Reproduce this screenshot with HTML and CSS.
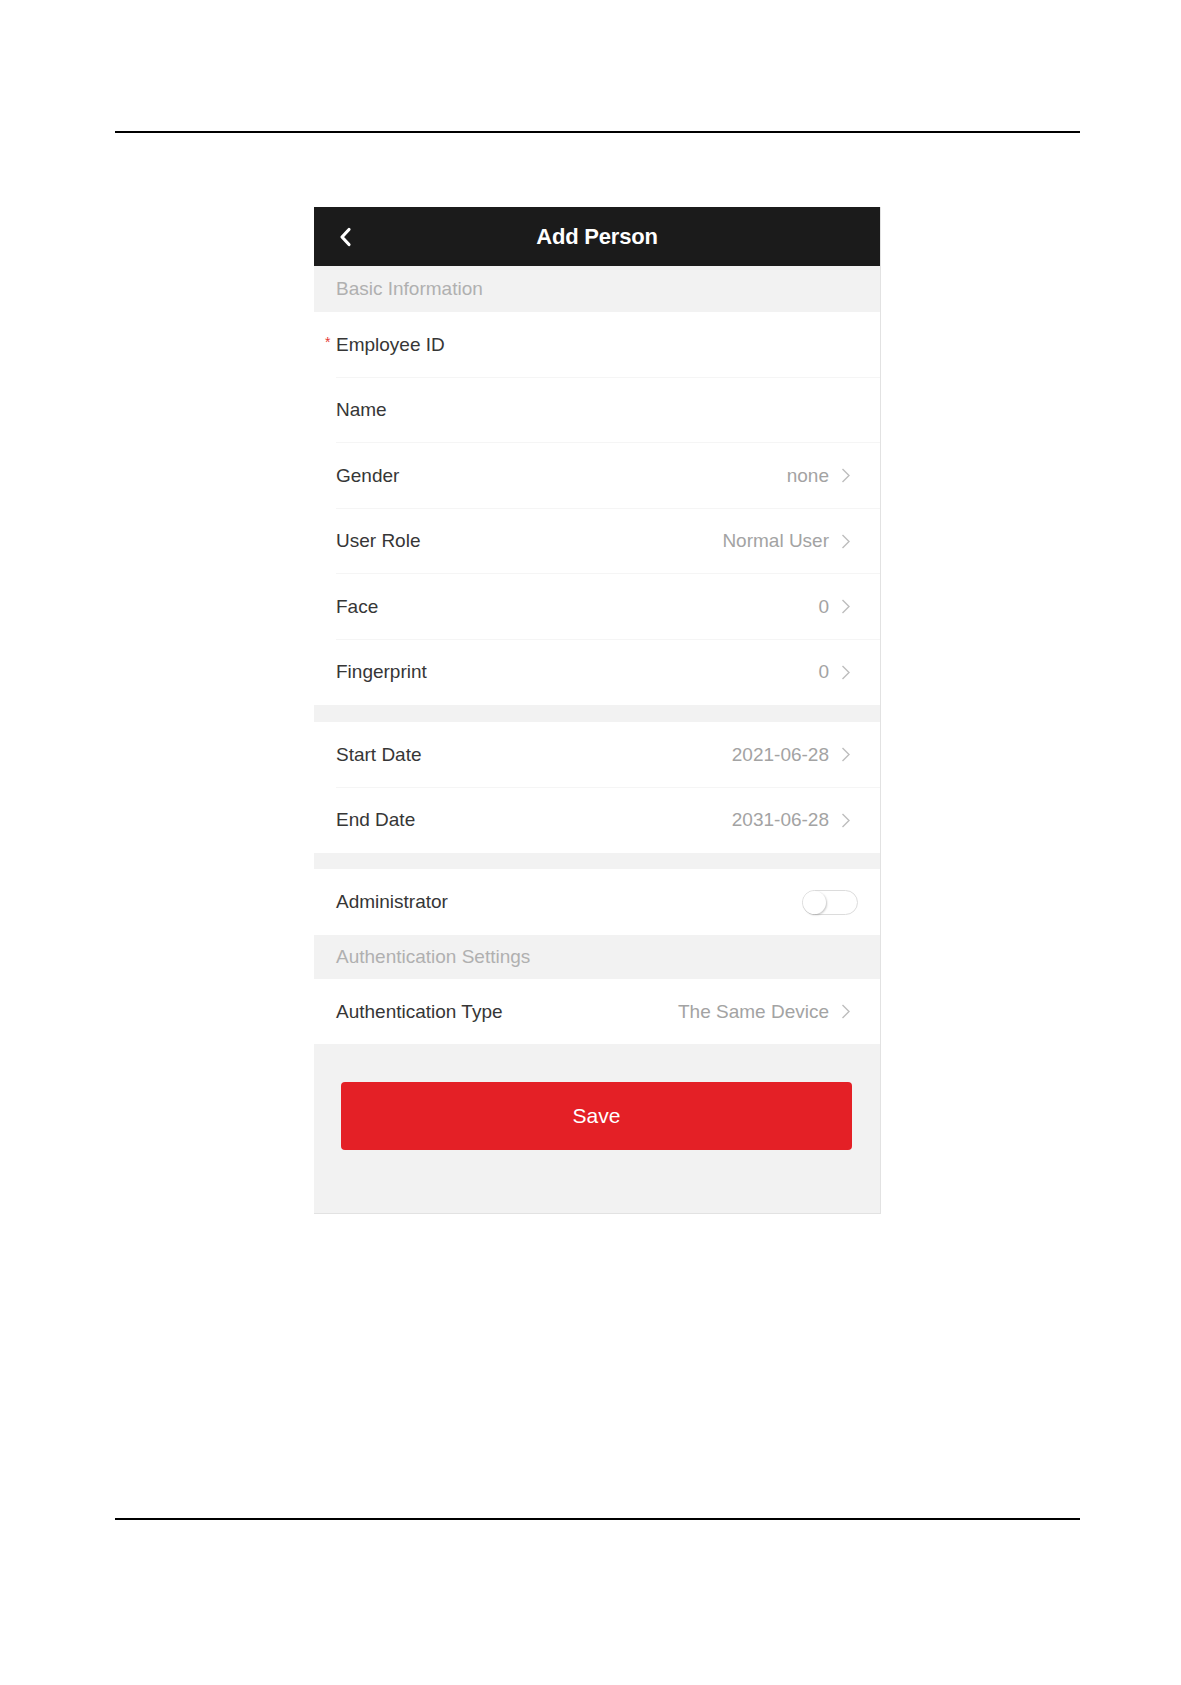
FILE: index.html
```html
<!DOCTYPE html>
<html lang="en">
<head>
<meta charset="utf-8">
<title>Add Person</title>
<link rel="stylesheet" href="styles.css">
</head>
<body>
<div class="page">
  <hr class="rule rule-top">
  <div class="phone">
    <div class="topbar">
      <span class="back">
        <svg width="14" height="20" viewBox="0 0 14 20"><polyline points="11,2.5 4,10 11,17.5" fill="none" stroke="#fff" stroke-width="3.2" stroke-linecap="round" stroke-linejoin="round"/></svg>
      </span>
      <span class="title">Add Person</span>
      <span class="spacer"></span>
    </div>

    <div class="section">Basic Information</div>
    <div class="row"><span class="label"><span class="req">*</span>Employee ID</span></div>
    <div class="row"><span class="label">Name</span></div>
    <div class="row"><span class="label">Gender</span><span class="value">none</span><svg class="chev" width="10" height="15" viewBox="0 0 10 15"><polyline points="1.5,1 8,7.5 1.5,14" fill="none" stroke="#bdbdbd" stroke-width="1.4"/></svg></div>
    <div class="row"><span class="label">User Role</span><span class="value">Normal User</span><svg class="chev" width="10" height="15" viewBox="0 0 10 15"><polyline points="1.5,1 8,7.5 1.5,14" fill="none" stroke="#bdbdbd" stroke-width="1.4"/></svg></div>
    <div class="row"><span class="label">Face</span><span class="value">0</span><svg class="chev" width="10" height="15" viewBox="0 0 10 15"><polyline points="1.5,1 8,7.5 1.5,14" fill="none" stroke="#bdbdbd" stroke-width="1.4"/></svg></div>
    <div class="row last"><span class="label">Fingerprint</span><span class="value">0</span><svg class="chev" width="10" height="15" viewBox="0 0 10 15"><polyline points="1.5,1 8,7.5 1.5,14" fill="none" stroke="#bdbdbd" stroke-width="1.4"/></svg></div>

    <div class="gap gap-a"></div>
    <div class="row"><span class="label">Start Date</span><span class="value">2021-06-28</span><svg class="chev" width="10" height="15" viewBox="0 0 10 15"><polyline points="1.5,1 8,7.5 1.5,14" fill="none" stroke="#bdbdbd" stroke-width="1.4"/></svg></div>
    <div class="row last"><span class="label">End Date</span><span class="value">2031-06-28</span><svg class="chev" width="10" height="15" viewBox="0 0 10 15"><polyline points="1.5,1 8,7.5 1.5,14" fill="none" stroke="#bdbdbd" stroke-width="1.4"/></svg></div>

    <div class="gap gap-b"></div>
    <div class="row row-admin last"><span class="label">Administrator</span><span class="toggle"><span class="knob"></span></span></div>

    <div class="section section-auth">Authentication Settings</div>
    <div class="row row-auth last"><span class="label">Authentication Type</span><span class="value">The Same Device</span><svg class="chev" width="10" height="15" viewBox="0 0 10 15"><polyline points="1.5,1 8,7.5 1.5,14" fill="none" stroke="#bdbdbd" stroke-width="1.4"/></svg></div>

    <div class="footer">
      <button class="save" type="button">Save</button>
    </div>
  </div>
  <hr class="rule rule-bottom">
</div>
</body>
</html>
```

FILE: styles.css
```css
* { box-sizing: border-box; }

html, body {
  margin: 0;
  padding: 0;
  background: #ffffff;
}

body {
  font-family: "Liberation Sans", Arial, sans-serif;
  color: #333333;
}

.page {
  width: 965px;
  margin-left: 115px;
  padding-top: 131px;
  padding-bottom: 165px;
}

.rule {
  margin: 0;
  border: 0;
  height: 2px;
  background: #000000;
}

.phone {
  width: 567px;
  height: 1007px;
  margin-top: 74px;
  margin-left: 199px;
  background: #ffffff;
  border-right: 1px solid #e2e2e2;
  border-bottom: 1px solid #e2e2e2;
  display: flex;
  flex-direction: column;
}

.rule-bottom {
  margin-top: 304px;
}

.topbar {
  height: 59px;
  flex: 0 0 59px;
  background: #1b1b1b;
  display: grid;
  grid-template-columns: 60px 1fr 60px;
  align-items: center;
}

.back {
  display: flex;
  align-items: center;
  padding-left: 24px;
  padding-top: 1px;
}

.title {
  text-align: center;
  color: #ffffff;
  font-weight: bold;
  font-size: 22px;
  letter-spacing: -0.2px;
}

.section {
  height: 46px;
  flex: 0 0 46px;
  background: #f2f2f2;
  color: #b0b0b0;
  font-size: 19px;
  padding-left: 22px;
  display: flex;
  align-items: center;
}

.section-auth {
  height: 44px;
  flex: 0 0 44px;
}

.row {
  height: 65.5px;
  flex: 0 0 65.5px;
  display: flex;
  align-items: center;
  padding-left: 22px;
  padding-right: 29px;
  position: relative;
  background: #ffffff;
}

.row::after {
  content: "";
  position: absolute;
  left: 22px;
  right: 0;
  bottom: 0;
  height: 1px;
  background: #f5f5f5;
}

.row.last::after { display: none; }

.row-admin { height: 66px; flex-basis: 66px; padding-right: 22px; }
.row-auth { height: 65px; flex-basis: 65px; }

.label {
  flex: 1;
  font-size: 19px;
  color: #363636;
}

.req {
  display: inline-block;
  width: 11px;
  color: #e53935;
  font-size: 14px;
  margin-left: -11px;
  vertical-align: 4px;
}

.value {
  font-size: 19px;
  color: #a3a3a3;
  margin-right: 12px;
}

.chev {
  display: block;
  flex: 0 0 auto;
}

.gap {
  background: #f2f2f2;
}

.gap-a { height: 17px; flex: 0 0 17px; }
.gap-b { height: 16px; flex: 0 0 16px; }

.toggle {
  width: 56px;
  height: 25px;
  border: 1.5px solid #dcdcdc;
  border-radius: 13px;
  background: #ffffff;
  display: flex;
  align-items: center;
}

.knob {
  width: 23px;
  height: 23px;
  border-radius: 50%;
  background: #ffffff;
  box-shadow: 1px 1px 2px rgba(0, 0, 0, 0.22);
}

.footer {
  flex: 1;
  background: #f2f2f2;
  padding: 38px 28px 0 27px;
}

.save {
  display: block;
  width: 100%;
  height: 68px;
  border: 0;
  border-radius: 4px;
  background: #e42026;
  color: #ffffff;
  font-family: "Liberation Sans", Arial, sans-serif;
  font-size: 21px;
  padding: 0;
}
```
